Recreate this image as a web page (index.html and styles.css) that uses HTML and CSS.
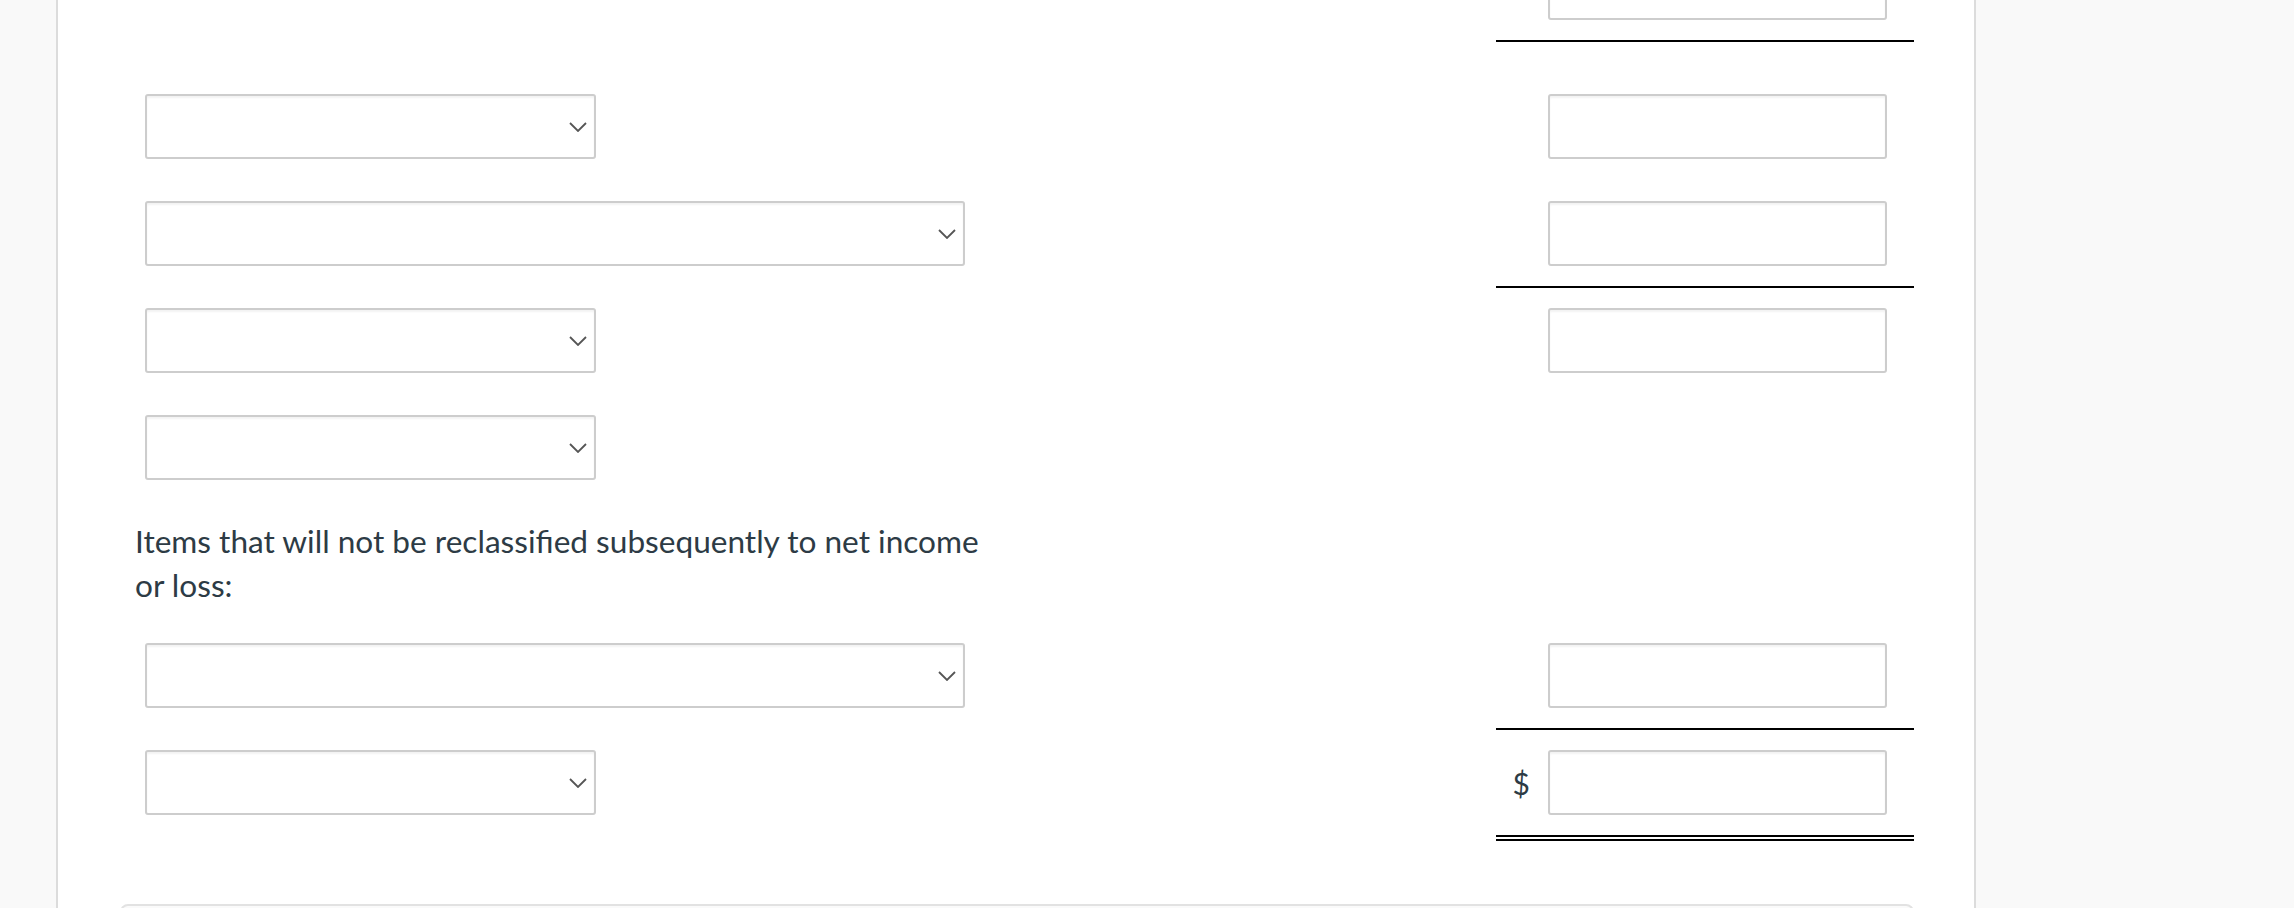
FILE: index.html
```html
<!DOCTYPE html>
<html lang="en">
<head>
<meta charset="utf-8">
<title>Statement of comprehensive income</title>
<link rel="stylesheet" href="styles.css">
</head>
<body>
<div class="page">
  <div class="gutter"></div>
  <main class="panel">
    <div class="row first">
      <div class="left"></div>
      <div class="right rule"><div class="field amount"></div></div>
    </div>

    <div class="row section">
      <div class="left"><div class="field select small"><svg class="chev" viewBox="0 0 18 10" width="18" height="10"><path d="M1 1 L9 9 L17 1" /></svg></div></div>
      <div class="right"><div class="field amount"></div></div>
    </div>
    <div class="row">
      <div class="left"><div class="field select wide"><svg class="chev" viewBox="0 0 18 10" width="18" height="10"><path d="M1 1 L9 9 L17 1" /></svg></div></div>
      <div class="right rule"><div class="field amount"></div></div>
    </div>
    <div class="row">
      <div class="left"><div class="field select small"><svg class="chev" viewBox="0 0 18 10" width="18" height="10"><path d="M1 1 L9 9 L17 1" /></svg></div></div>
      <div class="right"><div class="field amount"></div></div>
    </div>
    <div class="row">
      <div class="left"><div class="field select small"><svg class="chev" viewBox="0 0 18 10" width="18" height="10"><path d="M1 1 L9 9 L17 1" /></svg></div></div>
      <div class="right"></div>
    </div>

    <p class="label">Items that will not be reclassified subsequently to net income or loss:</p>

    <div class="row">
      <div class="left"><div class="field select wide"><svg class="chev" viewBox="0 0 18 10" width="18" height="10"><path d="M1 1 L9 9 L17 1" /></svg></div></div>
      <div class="right rule"><div class="field amount"></div></div>
    </div>
    <div class="row">
      <div class="left"><div class="field select small"><svg class="chev" viewBox="0 0 18 10" width="18" height="10"><path d="M1 1 L9 9 L17 1" /></svg></div></div>
      <div class="right double"><span class="dollar">$</span><div class="field amount"></div></div>
    </div>

    <div class="card"></div>
  </main>
  <div class="outside"></div>
</div>
</body>
</html>
```

FILE: styles.css
```css
html, body {
  margin: 0;
  padding: 0;
  background: #f9f9f9;
  height: 100%;
  overflow: hidden;
  font-family: Lato, "Liberation Sans", sans-serif;
  color: #2d3b45;
}

.page {
  display: flex;
  height: 908px;
  overflow: hidden;
}

.gutter {
  width: 56px;
  flex: none;
}

.panel {
  width: 1920px;
  flex: none;
  box-sizing: border-box;
  background: #ffffff;
  border-left: 2px solid #dcdcdc;
  border-right: 2px solid #dcdcdc;
  padding: 0 60px 0 62px;
}

.outside {
  flex: 1;
}

.row {
  display: grid;
  grid-template-columns: 1fr 418px;
}

.row.first {
  margin-top: -65px;
}

.row.section {
  margin-top: 32px;
}

.left {
  padding: 20px 0 0 25px;
}

.right {
  display: flex;
  justify-content: flex-end;
  align-items: center;
  gap: 18px;
  padding: 20px 27px 20px 0;
  border-bottom: 2px solid transparent;
}

.right.rule {
  border-bottom-color: #000000;
}

.right.double {
  border-bottom: 6px double #000000;
}

.field {
  height: 65px;
  box-sizing: border-box;
  border: 2px solid #cdcdcd;
  border-radius: 3px;
  background: #ffffff;
  box-shadow: inset 0 2px 2px rgba(0, 0, 0, 0.05);
}

.amount {
  width: 339px;
  flex: none;
}

.select {
  display: flex;
  align-items: center;
  justify-content: flex-end;
  padding-right: 7px;
}

.select.small {
  width: 451px;
}

.select.wide {
  width: 820px;
}

.chev path {
  fill: none;
  stroke: #555555;
  stroke-width: 1.8;
}

.dollar {
  font-size: 30px;
  line-height: 1;
  color: #2d3b45;
}

.label {
  margin: 0;
  padding: 39px 0 16px 15px;
  max-width: 870px;
  font-size: 31.6px;
  line-height: 44px;
}

.card {
  margin-top: 63px;
  height: 80px;
  border: 2px solid #e2e2e2;
  border-radius: 8px;
  background: #fafafa;
}
```
